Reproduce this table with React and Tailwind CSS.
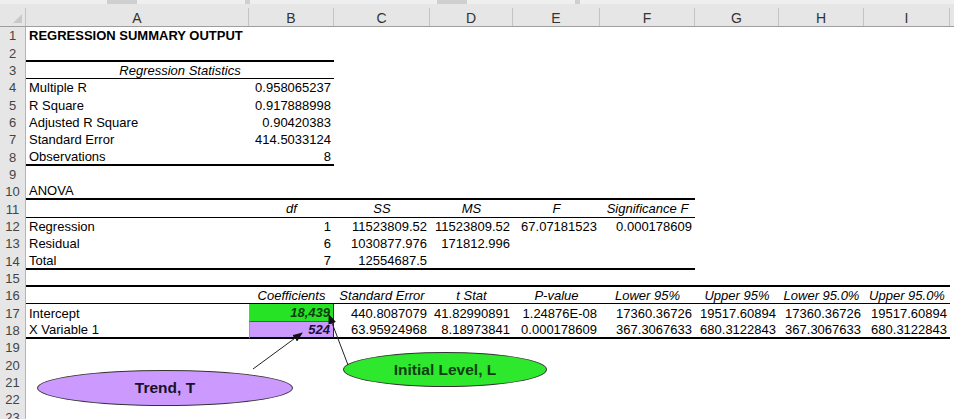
import React from 'react';

// column geometry taken from the sheet (A..I)
const COLS = [
  { key: 'A', w: 'w-[223px]' },
  { key: 'B', w: 'w-[85px]' },
  { key: 'C', w: 'w-[96px]' },
  { key: 'D', w: 'w-[83px]' },
  { key: 'E', w: 'w-[87px]' },
  { key: 'F', w: 'w-[95px]' },
  { key: 'G', w: 'w-[84px]' },
  { key: 'H', w: 'w-[85px]' },
  { key: 'I', w: 'w-[86px]' },
];

const R = (t) => ({ t, a: 'r' });
const H = (t) => ({ t, a: 'c', i: true });

const GREEN = 'bg-[#26e326] border-l border-l-[#9a9a9a] border-r border-r-[#2a2a2a] border-b border-b-[#555]';
const PURPLE = 'bg-[#cc99ff] border-l border-l-[#9a9a9a] border-r border-r-[#2a2a2a]';

// cells per row, plus bottom border (kind + how many columns it covers)
const ROWS = {
  1: { cells: [{ t: 'REGRESSION SUMMARY OUTPUT', b: true }] },
  2: { cells: [], bb: 'thick', span: 2 },
  3: { merged: 'Regression Statistics', bb: 'thin', span: 2 },
  4: { cells: ['Multiple R', R('0.958065237')] },
  5: { cells: ['R Square', R('0.917888998')] },
  6: { cells: ['Adjusted R Square', R('0.90420383')] },
  7: { cells: ['Standard Error', R('414.5033124')] },
  8: { cells: ['Observations', R('8')], bb: 'thick', span: 2 },
  10: { cells: ['ANOVA'], bb: 'thick', span: 6 },
  11: { cells: ['', H('df'), H('SS'), H('MS'), H('F'), H('Significance F')], bb: 'thin', span: 6 },
  12: { cells: ['Regression', R('1'), R('11523809.52'), R('11523809.52'), R('67.07181523'), R('0.000178609')] },
  13: { cells: ['Residual', R('6'), R('1030877.976'), R('171812.996')] },
  14: { cells: ['Total', R('7'), R('12554687.5')], bb: 'thick', span: 6 },
  15: { cells: [], bb: 'thick', span: 9 },
  16: {
    cells: ['', H('Coefficients'), H('Standard Error'), H('t Stat'), H('P-value'), H('Lower 95%'), H('Upper 95%'), H('Lower 95.0%'), H('Upper 95.0%')],
    bb: 'thin',
    span: 9,
  },
  17: {
    cells: [
      'Intercept',
      { t: '18,439', a: 'r', b: true, i: true, bg: GREEN, color: 'text-[#0d3d0d]' },
      R('440.8087079'), R('41.82990891'), R('1.24876E-08'), R('17360.36726'), R('19517.60894'), R('17360.36726'), R('19517.60894'),
    ],
  },
  18: {
    cells: [
      'X Variable 1',
      { t: '524', a: 'r', b: true, i: true, bg: PURPLE, color: 'text-[#1a1033]' },
      R('63.95924968'), R('8.18973841'), R('0.000178609'), R('367.3067633'), R('680.3122843'), R('367.3067633'), R('680.3122843'),
    ],
    bb: 'thick',
    span: 9,
  },
};

const rowH = (n) => (n % 3 === 2 ? 'h-[18px]' : 'h-[17px]');

function Cell({ col, cell, border }) {
  const c = typeof cell === 'string' ? { t: cell } : cell || { t: '' };
  const align = c.a === 'r' ? 'justify-end' : c.a === 'c' ? 'justify-center' : 'justify-start';
  const borderCls = border === 'thick' ? 'border-b-2 border-b-black' : border === 'thin' ? 'border-b border-b-black' : '';
  return (
    <div
      className={`${col.w} shrink-0 flex items-center px-[3px] whitespace-nowrap ${align} ${borderCls} ${c.bg || ''} ${c.b ? 'font-bold' : ''} ${c.i ? 'italic' : ''} ${c.color || 'text-black'}`}
    >
      {c.t}
    </div>
  );
}

function RowHeader({ n }) {
  return (
    <div className="w-[26px] shrink-0 bg-[#e6e6e6] border-r border-[#b4b4b4] flex items-center justify-center text-[#444]">
      {n}
    </div>
  );
}

function SheetRow({ n }) {
  const row = ROWS[n] || { cells: [] };
  if (row.merged) {
    return (
      <div className={`flex ${rowH(n)}`}>
        <RowHeader n={n} />
        <div className="w-[308px] shrink-0 flex items-center justify-center italic border-b border-b-black">
          {row.merged}
        </div>
      </div>
    );
  }
  return (
    <div className={`flex ${rowH(n)}`}>
      <RowHeader n={n} />
      {COLS.map((col, i) => (
        <Cell key={col.key} col={col} cell={row.cells[i]} border={row.bb && i < row.span ? row.bb : null} />
      ))}
    </div>
  );
}

function Arrows() {
  return (
    <svg className="absolute left-0 top-0 pointer-events-none" width="954" height="419">
      <defs>
        <marker id="head" markerWidth="10" markerHeight="8" refX="9" refY="4" orient="auto" markerUnits="userSpaceOnUse">
          <path d="M0,0 L10,4 L0,8 Z" fill="#111" />
        </marker>
      </defs>
      <line x1="253" y1="369" x2="302" y2="333" stroke="#222" strokeWidth="1" markerEnd="url(#head)" />
      <line x1="348" y1="365" x2="329" y2="315" stroke="#222" strokeWidth="1" markerEnd="url(#head)" />
    </svg>
  );
}

export default function App() {
  const rows = Array.from({ length: 23 }, (_, i) => i + 1);
  return (
    <div className="relative w-[954px] h-[419px] overflow-hidden bg-white text-[13px] leading-none font-['Liberation_Sans',Arial,sans-serif]">
      {/* toolbar remnant */}
      <div className="flex h-[4px] bg-[#cfcfcf]">
        <div className="w-[107px] bg-[#efefef]" />
        <div className="w-[30px]" />
        <div className="w-[108px] bg-[#efefef]" />
        <div className="w-[5px]" />
        <div className="w-[187px] bg-[#efefef]" />
        <div className="w-[30px]" />
        <div className="w-[108px] bg-[#efefef]" />
        <div className="w-[5px]" />
        <div className="flex-1 bg-[#efefef]" />
      </div>

      {/* column letters */}
      <div className="flex h-[23px] bg-[#e6e6e6] border-b border-[#9e9e9e] pt-[4px] text-[14px] text-[#333]">
        <div className="w-[26px] shrink-0 border-r border-[#c4c4c4] relative">
          <div className="absolute right-[3px] bottom-[3px] w-0 h-0 border-l-[9px] border-l-transparent border-b-[9px] border-b-[#c9c9c9]" />
        </div>
        {COLS.map((col) => (
          <div key={col.key} className={`${col.w} shrink-0 flex items-center justify-center border-r border-[#c4c4c4] pt-[1px]`}>
            {col.key}
          </div>
        ))}
      </div>

      {rows.map((n) => (
        <SheetRow key={n} n={n} />
      ))}

      {/* callouts */}
      <div className="absolute left-[37px] top-[370px] w-[256px] h-[36px] rounded-[50%] bg-[#cc99ff] border border-[#333] flex items-center justify-center font-bold text-[15.5px] text-[#15122a]">
        Trend, T
      </div>
      <div className="absolute left-[343px] top-[352px] w-[204px] h-[35px] rounded-[50%] bg-[#2de82d] border border-[#333] flex items-center justify-center font-bold text-[15.5px] text-[#123d12]">
        Initial Level, L
      </div>
      <Arrows />
    </div>
  );
}
